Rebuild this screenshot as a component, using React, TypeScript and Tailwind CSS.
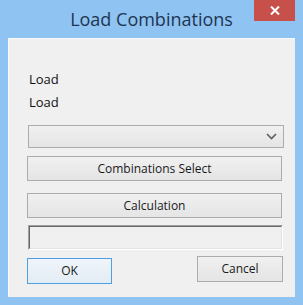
import React from 'react';

const font = { fontFamily: '"Open Sans", "Noto Sans", sans-serif' };

const btn =
  'flex items-center justify-center border border-[#acacac] bg-gradient-to-b from-[#f0f0f0] to-[#e5e5e5] text-[12px] text-[#1a1a1a]';

export default function App() {
  return (
    <div
      className="relative w-[303px] h-[305px] bg-[#8fc3f1] flex flex-col overflow-hidden"
      style={font}
    >
      {/* Title bar */}
      <div className="h-[38px] flex items-center justify-center pt-[1px]">
        <span className="text-[18px] text-[#1e3553]">Load Combinations</span>
      </div>
      <button className="absolute right-[8px] top-0 w-[41px] h-[21px] bg-[#c7504b] flex items-center justify-center">
        <svg width="10" height="9" viewBox="0 0 10 9">
          <path d="M1 0.5 L9 8.5 M9 0.5 L1 8.5" stroke="#fff" strokeWidth="2" />
        </svg>
      </button>

      {/* Client area */}
      <div className="mx-[8px] h-[259px] bg-[#f0f0f0] border-t border-l border-[#fafafa] flex flex-col pl-[18px] text-[13px] text-[#111]">
        <div className="mt-[32px] ml-[2px] leading-[16px] h-[16px]">Load</div>
        <div className="mt-[7px] ml-[2px] leading-[16px] h-[16px]">Load</div>

        {/* Dropdown */}
        <div className="mt-[15px] ml-[1px] w-[256px] h-[23px] border border-[#acacac] bg-gradient-to-b from-[#f0f0f0] to-[#e5e5e5] flex items-center justify-end pr-[6px]">
          <svg width="11" height="7" viewBox="0 0 11 7">
            <path d="M1 1 L5.5 5.5 L10 1" fill="none" stroke="#5e5e5e" strokeWidth="1.6" />
          </svg>
        </div>

        <div className={`${btn} mt-[8px] w-[255px] h-[25px]`}>Combinations Select</div>
        <div className={`${btn} mt-[12px] w-[255px] h-[25px]`}>Calculation</div>

        {/* Read-only text box */}
        <div className="mt-[7px] ml-[1px] w-[255px] h-[25px] border-t border-l border-[#a0a0a0] border-b border-r border-b-white border-r-white">
          <div className="w-full h-full border-t border-l border-[#696969] border-b border-r border-b-[#e3e3e3] border-r-[#e3e3e3] bg-[#f0f0f0]" />
        </div>

        <div className="mt-[6px] flex items-start justify-between w-[256px]">
          <div className="mt-[2px] w-[85px] h-[26px] flex items-center justify-center border border-[#4f9fe3] bg-gradient-to-b from-[#eef4fa] to-[#e4ecf4] text-[12px] text-[#1a1a1a]">
            OK
          </div>
          <div className={`${btn} w-[86px] h-[26px]`}>Cancel</div>
        </div>
      </div>
    </div>
  );
}
